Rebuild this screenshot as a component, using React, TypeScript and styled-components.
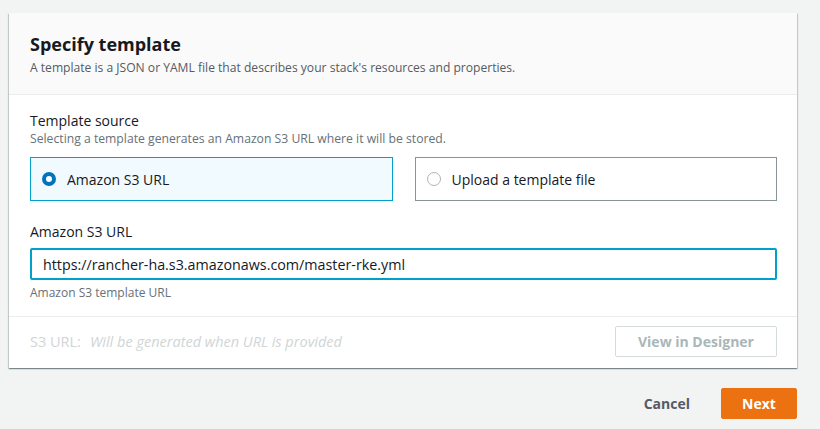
import styled, { createGlobalStyle } from 'styled-components'

const GlobalStyle = createGlobalStyle`
  html, body {
    margin: 0;
    padding: 0;
    background: #f2f3f3;
    font-family: 'Open Sans', 'Liberation Sans', Arial, sans-serif;
    color: #16191f;
  }
  * { box-sizing: border-box; }
`

export default function App() {
  return (
    <>
      <GlobalStyle />
      <Page>
        <Card>
          <CardHeader>
            <Title>Specify template</Title>
            <Subtitle>A template is a JSON or YAML file that describes your stack's resources and properties.</Subtitle>
          </CardHeader>

          <CardBody>
            <Field>
              <Label>Template source</Label>
              <Hint>Selecting a template generates an Amazon S3 URL where it will be stored.</Hint>
              <TileRow>
                <Tile $selected>
                  <Radio $checked />
                  <TileText>Amazon S3 URL</TileText>
                </Tile>
                <Tile>
                  <Radio />
                  <TileText>Upload a template file</TileText>
                </Tile>
              </TileRow>
            </Field>

            <Field>
              <Label>Amazon S3 URL</Label>
              <UrlInput defaultValue="https://rancher-ha.s3.amazonaws.com/master-rke.yml" />
              <Help>Amazon S3 template URL</Help>
            </Field>
          </CardBody>

          <CardFooter>
            <S3Line>
              <S3Key>S3 URL:</S3Key>
              <S3Value>Will be generated when URL is provided</S3Value>
            </S3Line>
            <DisabledButton disabled>View in Designer</DisabledButton>
          </CardFooter>
        </Card>

        <Actions>
          <LinkButton>Cancel</LinkButton>
          <PrimaryButton>Next</PrimaryButton>
        </Actions>
      </Page>
    </>
  )
}

const Page = styled.div`
  width: 820px;
  height: 429px;
  padding: 13px 23px 0 9px;
  overflow: hidden;
`

const Card = styled.div`
  background: #fff;
  box-shadow: 0 1px 1px 0 rgba(0, 28, 36, 0.3), 1px 1px 1px 0 rgba(0, 28, 36, 0.15), -1px 1px 1px 0 rgba(0, 28, 36, 0.15);
`

const CardHeader = styled.div`
  background: #fafafa;
  border-bottom: 1px solid #eaeded;
  padding: 19px 21px 18px;
`

const Title = styled.h2`
  margin: 0;
  font-size: 18px;
  line-height: 24px;
  font-weight: 700;
  color: #16191f;
`

const Subtitle = styled.p`
  margin: 4px 0 0;
  font-size: 12.1px;
  line-height: 16px;
  color: #545b64;
`

const CardBody = styled.div`
  padding: 16px 20px 16px 21px;
  display: flex;
  flex-direction: column;
  gap: 21px;
`

const Field = styled.div`
  display: flex;
  flex-direction: column;
`

const Label = styled.div`
  font-size: 14px;
  line-height: 20px;
  color: #16191f;
`

const Hint = styled.div`
  font-size: 12.2px;
  line-height: 16px;
  color: #687078;
`

const TileRow = styled.div`
  display: grid;
  grid-template-columns: 1fr 1fr;
  gap: 22px;
  margin-top: 10px;
`

const Tile = styled.div<{ $selected?: boolean }>`
  height: 44px;
  display: flex;
  align-items: center;
  gap: 11px;
  padding: 0 11px;
  border: 1px solid ${p => (p.$selected ? '#00a1c9' : '#879596')};
  background: ${p => (p.$selected ? '#f1faff' : '#fff')};
`

const Radio = styled.span<{ $checked?: boolean }>`
  width: 14px;
  height: 14px;
  border-radius: 50%;
  flex: none;
  border: ${p => (p.$checked ? '4px solid #0073bb' : '1px solid #aab7b8')};
  background: #fff;
`

const TileText = styled.span`
  font-size: 14px;
  color: #16191f;
`

const UrlInput = styled.input`
  margin-top: 6px;
  height: 32px;
  width: 100%;
  border: 2px solid #00a1c9;
  border-radius: 2px;
  padding: 0 11px;
  font-family: inherit;
  font-size: 14.3px;
  color: #16191f;
  outline: none;
`

const Help = styled.div`
  margin-top: 6px;
  font-size: 12px;
  line-height: 14px;
  color: #687078;
`

const CardFooter = styled.div`
  border-top: 1px solid #eaeded;
  padding: 9px 20px 11px 21px;
  display: flex;
  align-items: center;
  justify-content: space-between;
`

const S3Line = styled.div`
  display: flex;
  gap: 9px;
  font-size: 14.5px;
  color: #d0d5d5;
`

const S3Key = styled.span``

const S3Value = styled.span`
  font-style: italic;
`

const DisabledButton = styled.button`
  width: 162px;
  height: 31px;
  background: #fff;
  border: 1px solid #d5dbdb;
  border-radius: 2px;
  font-family: inherit;
  font-size: 14px;
  font-weight: 700;
  color: #aab7b8;
`

const Actions = styled.div`
  display: flex;
  justify-content: flex-end;
  align-items: center;
  gap: 11px;
  margin-top: 20px;
`

const LinkButton = styled.button`
  background: none;
  border: none;
  padding: 0 20px;
  height: 31px;
  font-family: inherit;
  font-size: 14px;
  font-weight: 700;
  color: #545b64;
`

const PrimaryButton = styled.button`
  width: 76px;
  height: 31px;
  background: #ec7211;
  border: 1px solid #ec7211;
  border-radius: 2px;
  font-family: inherit;
  font-size: 14px;
  font-weight: 700;
  color: #fff;
`
